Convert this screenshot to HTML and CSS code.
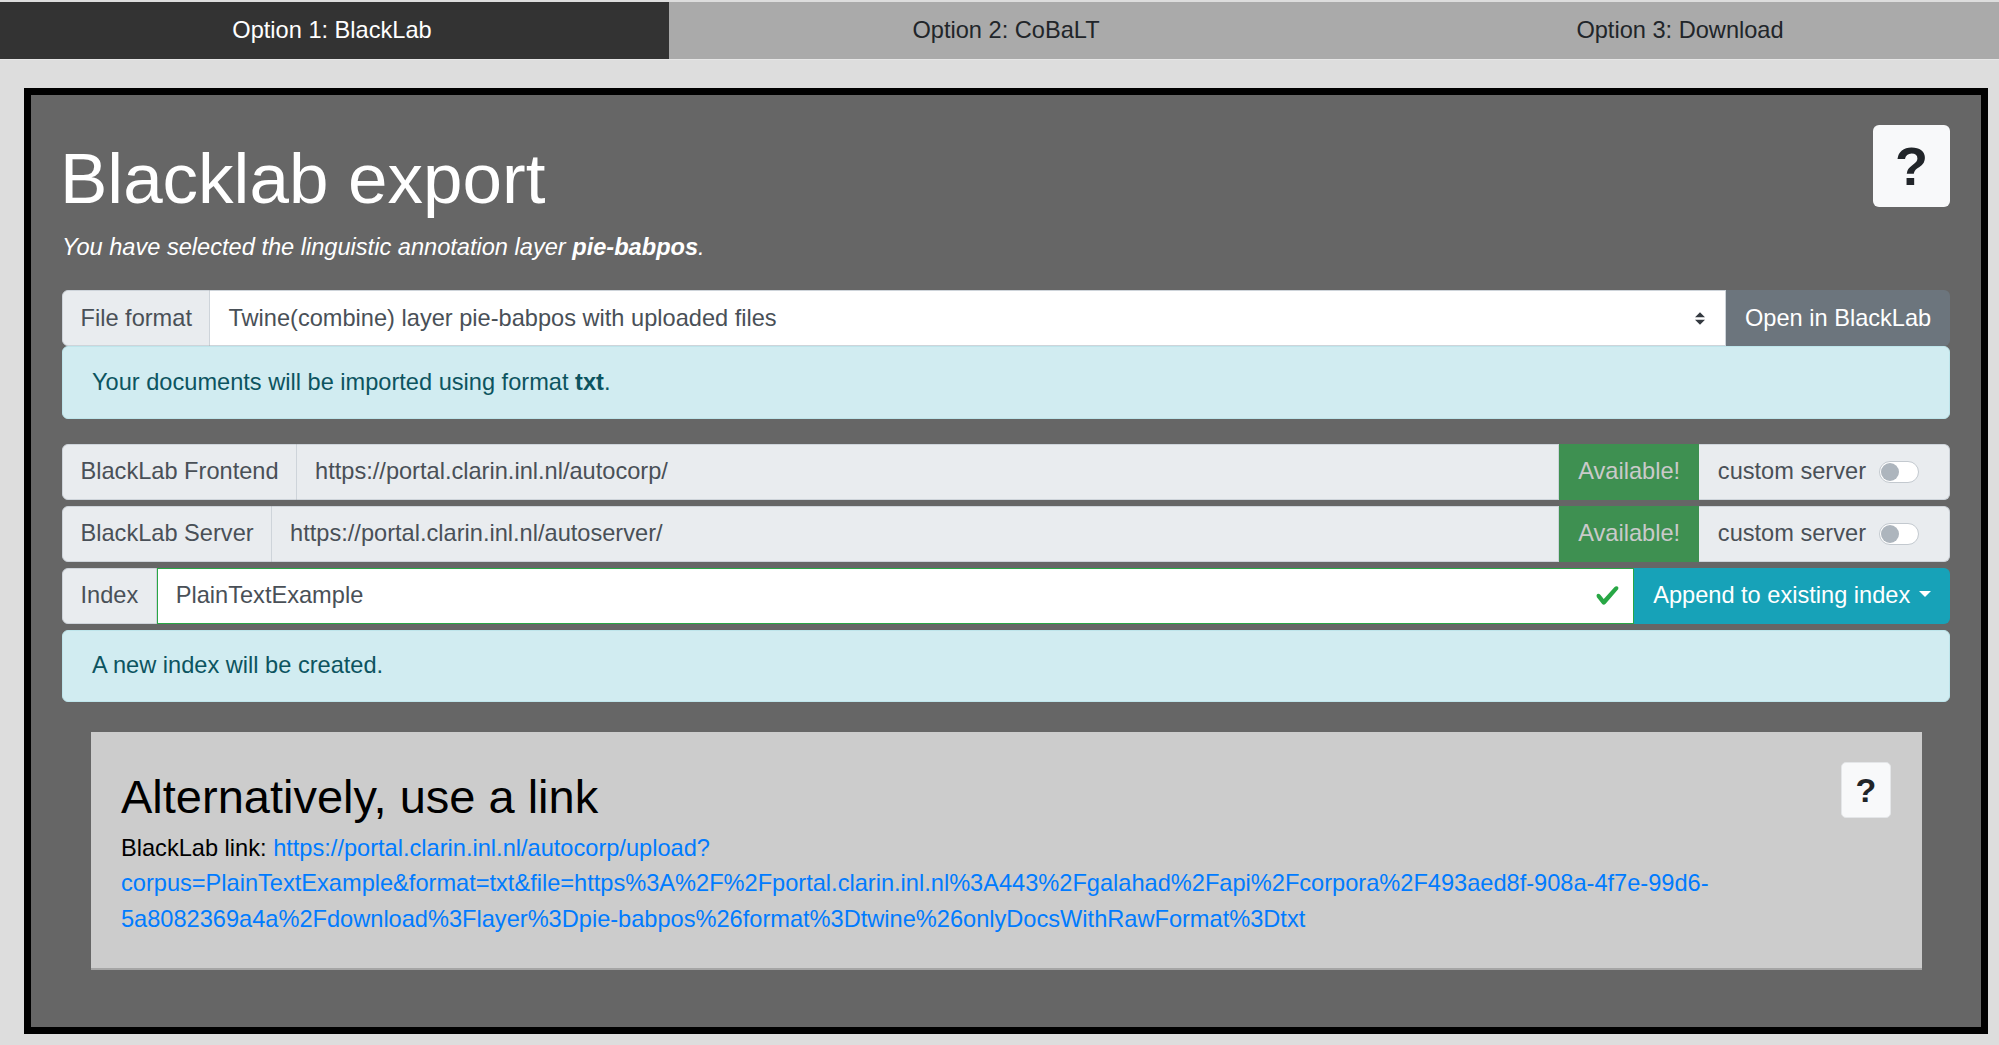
FILE: index.html
```html
<!DOCTYPE html>
<html lang="en">
<head>
<meta charset="utf-8">
<title>Blacklab export</title>
<link rel="stylesheet" href="styles.css">
</head>
<body>
<nav class="tabs">
  <div class="tab tab-active">Option 1: BlackLab</div>
  <div class="tab">Option 2: CoBaLT</div>
  <div class="tab">Option 3: Download</div>
</nav>
<main class="panel">
  <div class="help help-lg">?</div>
  <h1 class="title">Blacklab export</h1>
  <p class="subtitle">You have selected the linguistic annotation layer <b>pie-babpos</b>.</p>

  <div class="group">
    <span class="addon">File format</span>
    <div class="field select">
      <span class="field-text">Twine(combine) layer pie-babpos with uploaded files</span>
      <svg class="select-arrows" viewBox="0 0 4 5" width="10" height="13"><path d="M2 0L0 2h4zm0 5L0 3h4z" fill="#343a40"/></svg>
    </div>
    <span class="btn btn-secondary btn-end">Open in BlackLab</span>
  </div>
  <div class="alert alert-first">Your documents will be imported using format <b>txt</b>.</div>

  <div class="stack">
    <div class="group">
      <span class="addon">BlackLab Frontend</span>
      <div class="field field-ro"><span class="field-text">https://portal.clarin.inl.nl/autocorp/</span></div>
      <span class="btn btn-success-disabled">Available!</span>
      <span class="addon addon-end switch-box">custom server <span class="switch"><span class="knob"></span></span></span>
    </div>
    <div class="group">
      <span class="addon">BlackLab Server</span>
      <div class="field field-ro"><span class="field-text">https://portal.clarin.inl.nl/autoserver/</span></div>
      <span class="btn btn-success-disabled">Available!</span>
      <span class="addon addon-end switch-box">custom server <span class="switch"><span class="knob"></span></span></span>
    </div>
    <div class="group">
      <span class="addon">Index</span>
      <div class="field field-valid">
        <span class="field-text">PlainTextExample</span>
        <svg class="check" viewBox="0 0 8 8" width="25" height="25"><path fill="#28a745" d="M2.3 6.73L.6 4.53c-.4-1.04.46-1.4 1.1-.8l1.1 1.4 3.4-3.8c.6-.63 1.6-.27 1.2.7l-4 4.6c-.43.5-.8.4-1.1.1z"/></svg>
      </div>
      <span class="btn btn-info btn-end dropdown">Append to existing index</span>
    </div>
    <div class="alert">A new index will be created.</div>
  </div>

  <section class="alt">
    <div class="help help-sm">?</div>
    <h2 class="alt-title">Alternatively, use a link</h2>
    <p class="alt-text">BlackLab link: <a class="link" href="#">https://portal.clarin.inl.nl/autocorp/upload?<br>corpus=PlainTextExample&amp;format=txt&amp;file=https%3A%2F%2Fportal.clarin.inl.nl%3A443%2Fgalahad%2Fapi%2Fcorpora%2F493aed8f-908a-4f7e-99d6-<br>5a8082369a4a%2Fdownload%3Flayer%3Dpie-babpos%26format%3Dtwine%26onlyDocsWithRawFormat%3Dtxt</a></p>
  </section>
</main>
</body>
</html>
```

FILE: styles.css
```css
* { box-sizing: border-box; }

html, body {
  margin: 0;
  padding: 0;
}

body {
  background: #dddddd;
  font-family: "Liberation Sans", Arial, sans-serif;
  font-size: 23.6px;
  line-height: 1.5;
  color: #212529;
  width: 1999px;
  height: 1045px;
  overflow: hidden;
}

/* ---------- tabs ---------- */
.tabs {
  display: flex;
  margin: 2px 0 0 -5px;
  width: 2022px;
  height: 58px;
  border-bottom: 1px solid #e6e6e6;
}

.tab {
  flex: 1;
  display: flex;
  align-items: center;
  justify-content: center;
  background: #aaaaaa;
  color: #212529;
}

.tab-active {
  background: #333333;
  color: #ffffff;
}

/* ---------- main panel ---------- */
.panel {
  margin: 28px 0 0 24px;
  width: 1964px;
  height: 946px;
  background: #666666;
  border: 7px solid #000;
  padding: 30px 31px 30px 31px;
}

.help {
  float: right;
  display: flex;
  align-items: center;
  justify-content: center;
  background: #f8f9fa;
  color: #212529;
  font-weight: bold;
  line-height: 1;
}

.help-lg {
  width: 77px;
  height: 82px;
  border-radius: 6px;
  font-size: 54px;
}

.help-sm {
  width: 50px;
  height: 56px;
  border-radius: 5px;
  font-size: 34px;
  border: 1px solid #e4e6e8;
}

.title {
  margin: 11px 0 9px -2px;
  font-size: 71px;
  font-weight: 400;
  line-height: 1.2;
  color: #ffffff;
}

.subtitle {
  margin: 0 0 25px;
  line-height: 35.2px;
  color: #ffffff;
  font-style: italic;
}

/* ---------- input groups ---------- */
.group {
  display: flex;
  height: 56px;
}

.addon {
  display: flex;
  align-items: center;
  padding: 0 17.5px;
  background: #e9ecef;
  border: 1px solid #ced4da;
  border-radius: 6px 0 0 6px;
  color: #495057;
  white-space: nowrap;
}

.addon-end {
  border-left: 0;
  border-radius: 0 6px 6px 0;
}

.field {
  flex: 1;
  min-width: 0;
  display: flex;
  align-items: center;
  padding: 0 18px;
  background: #ffffff;
  border: 1px solid #ced4da;
  border-left: 0;
  color: #495057;
  white-space: nowrap;
}

.field-text {
  flex: 1;
}

.select {
  padding-right: 20px;
}

.select-arrows {
  display: block;
  flex: none;
}

.field-ro {
  background: #e9ecef;
}

.field-valid {
  border: 1px solid #28a745;
  padding-right: 13px;
}

.check {
  display: block;
  flex: none;
}

.btn {
  display: flex;
  align-items: center;
  padding: 0 18.75px;
  white-space: nowrap;
}

.btn-end {
  border-radius: 0 6px 6px 0;
}

.btn-secondary {
  background: #6c757d;
  color: #ffffff;
}

.btn-success-disabled {
  background: #3e9051;
  color: #cacaca;
}

.btn-info {
  background: #17a2b8;
  color: #ffffff;
}

.dropdown::after {
  content: "";
  display: block;
  margin-left: 9px;
  margin-top: -3px;
  border-top: 6.5px solid #ffffff;
  border-left: 6px solid transparent;
  border-right: 6px solid transparent;
}

.switch-box {
  padding: 0 30px 0 19px;
  gap: 13px;
}

.switch {
  display: flex;
  align-items: center;
  width: 40px;
  height: 22px;
  padding: 0 1px;
  background: #ffffff;
  border: 1px solid #c3c9cf;
  border-radius: 11px;
}

.knob {
  width: 18px;
  height: 18px;
  border-radius: 50%;
  background: #adb5bd;
}

/* ---------- alerts ---------- */
.alert {
  padding: 17.5px 29px;
  line-height: 35.2px;
  background: #d1ecf1;
  border: 1px solid #bee5eb;
  border-radius: 6px;
  color: #0c5460;
}

.alert-first {
  margin-bottom: 25px;
}

.stack {
  display: flex;
  flex-direction: column;
  gap: 6px;
}

/* ---------- alternative link box ---------- */
.alt {
  margin: 30px 28px 0 29px;
  padding: 30px 31px 31px 30px;
  background: #cccccc;
  border-bottom: 2px solid #a5a5a5;
  color: #000000;
}

.alt-title {
  margin: 7px 0 6px;
  font-size: 47px;
  font-weight: 400;
  line-height: 1.2;
}

.alt-text {
  margin: 0;
  line-height: 35.2px;
  white-space: nowrap;
}

.link {
  color: #007bff;
  text-decoration: none;
}
```
